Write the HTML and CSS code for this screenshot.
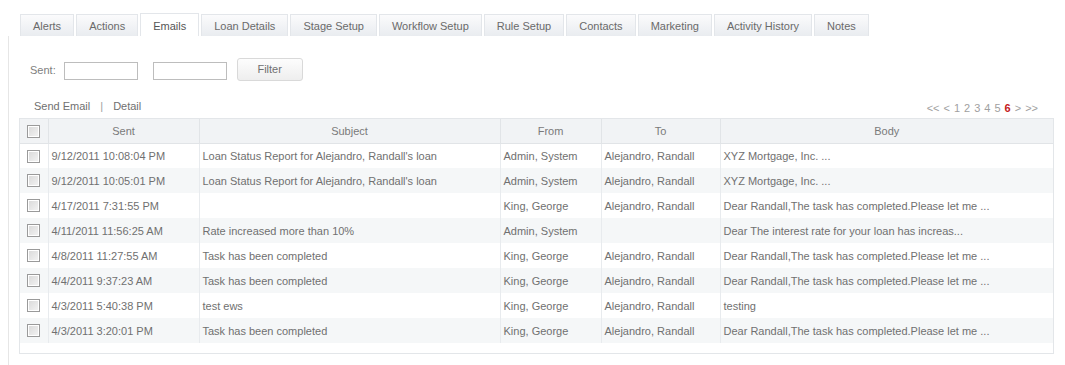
FILE: index.html
```html
<!DOCTYPE html>
<html>
<head>
<meta charset="utf-8">
<link rel="stylesheet" href="styles.css">
</head>
<body>
<div class="page">
  <div class="tabs">
    <div class="tab">Alerts</div>
    <div class="tab">Actions</div>
    <div class="tab active">Emails</div>
    <div class="tab">Loan Details</div>
    <div class="tab">Stage Setup</div>
    <div class="tab">Workflow Setup</div>
    <div class="tab">Rule Setup</div>
    <div class="tab">Contacts</div>
    <div class="tab">Marketing</div>
    <div class="tab">Activity History</div>
    <div class="tab">Notes</div>
  </div>
  <div class="panel">
    <div class="filter">
      <span class="label">Sent:</span>
      <span class="input"></span>
      <span class="input second"></span>
      <span class="btn">Filter</span>
    </div>
    <div class="toolbar">
      <div class="links"><span>Send Email</span><span class="sep">|</span><span>Detail</span></div>
      <div class="pager"><span>&lt;&lt;</span><span>&lt;</span><span>1</span><span>2</span><span>3</span><span>4</span><span>5</span><span class="cur">6</span><span>&gt;</span><span>&gt;&gt;</span></div>
    </div>
    <div class="grid">
      <table>
        <colgroup>
          <col class="c-chk"><col class="c-sent"><col class="c-subj"><col class="c-from"><col class="c-to"><col class="c-body">
        </colgroup>
        <thead>
          <tr><th><span class="cb"></span></th><th>Sent</th><th>Subject</th><th>From</th><th>To</th><th>Body</th></tr>
        </thead>
        <tbody>
          <tr><td><span class="cb"></span></td><td>9/12/2011 10:08:04 PM</td><td>Loan Status Report for Alejandro, Randall's loan</td><td>Admin, System</td><td>Alejandro, Randall</td><td>XYZ Mortgage, Inc. ...</td></tr>
          <tr><td><span class="cb"></span></td><td>9/12/2011 10:05:01 PM</td><td>Loan Status Report for Alejandro, Randall's loan</td><td>Admin, System</td><td>Alejandro, Randall</td><td>XYZ Mortgage, Inc. ...</td></tr>
          <tr><td><span class="cb"></span></td><td>4/17/2011 7:31:55 PM</td><td></td><td>King, George</td><td>Alejandro, Randall</td><td>Dear Randall,The task has completed.Please let me ...</td></tr>
          <tr><td><span class="cb"></span></td><td>4/11/2011 11:56:25 AM</td><td>Rate increased more than 10%</td><td>Admin, System</td><td></td><td>Dear The interest rate for your loan has increas...</td></tr>
          <tr><td><span class="cb"></span></td><td>4/8/2011 11:27:55 AM</td><td>Task has been completed</td><td>King, George</td><td>Alejandro, Randall</td><td>Dear Randall,The task has completed.Please let me ...</td></tr>
          <tr><td><span class="cb"></span></td><td>4/4/2011 9:37:23 AM</td><td>Task has been completed</td><td>King, George</td><td>Alejandro, Randall</td><td>Dear Randall,The task has completed.Please let me ...</td></tr>
          <tr><td><span class="cb"></span></td><td>4/3/2011 5:40:38 PM</td><td>test ews</td><td>King, George</td><td>Alejandro, Randall</td><td>testing</td></tr>
          <tr><td><span class="cb"></span></td><td>4/3/2011 3:20:01 PM</td><td>Task has been completed</td><td>King, George</td><td>Alejandro, Randall</td><td>Dear Randall,The task has completed.Please let me ...</td></tr>
        </tbody>
      </table>
    </div>
  </div>
</div>
</body>
</html>
```
FILE: styles.css
```css
* { box-sizing: border-box; }
html, body { margin: 0; padding: 0; background: #fff; }
body {
  font-family: "Liberation Sans", Arial, sans-serif;
  font-size: 11px;
  color: #707070;
}
.page { padding-top: 13px; height: 365px; display: flex; flex-direction: column; }
.tabs { display: flex; gap: 2px; margin-left: 20px; align-items: flex-end; }
.tab {
  height: 22px;
  line-height: 22px;
  padding: 0 12px;
  border: 1px solid #e3e6ea;
  border-bottom: none;
  background: linear-gradient(#fbfbfc, #e9ecf0);
  color: #6a6a6a;
}
.tab.active {
  height: 23px;
  line-height: 24px;
  background: #fff;
  color: #555;
}
.panel {
  flex: 1;
  margin-left: 8px;
  border-left: 1px solid #e6e6e6;
  padding: 22px 0 0 10px;
}
.filter { display: flex; align-items: center; padding-left: 11px; height: 23px; }
.label { color: #808080; margin-right: 8px; }
.input {
  width: 74px; height: 18px;
  border: 1px solid #bdbdbd;
  background: #fff;
  margin-top: 2px;
}
.input.second { margin-left: 15px; }
.btn {
  margin-left: 10px;
  width: 66px; height: 23px;
  border: 1px solid #d9d9d9;
  border-radius: 3px;
  background: linear-gradient(#fdfdfd, #eeeeee);
  text-align: center;
  line-height: 21px;
  color: #707070;
}
.toolbar { display: flex; justify-content: space-between; align-items: flex-end; height: 33px; padding: 0 27px 0 15px; }
.links { color: #707070; padding-bottom: 2px; }
.links .sep { margin: 0 10px; color: #a0a0a0; }
.pager { display: flex; gap: 4px; color: #a0a0a0; font-size: 11px; padding-bottom: 0; }
.pager span { display: inline-block; }
.pager .cur { color: #c41a1a; font-weight: bold; }
.grid {
  margin-top: 4px;
  width: 1035px;
  border: 1px solid #e3e6e9;
  padding-bottom: 10px;
}
table { border-collapse: collapse; width: 100%; table-layout: fixed; }
col.c-chk { width: 28px; }
col.c-sent { width: 151px; }
col.c-subj { width: 301px; }
col.c-from { width: 101px; }
col.c-to { width: 119px; }
th {
  height: 24px;
  font-weight: normal;
  color: #7a7a7a;
  background: #f1f3f5;
  border-left: 1px solid #e1e4e7;
  border-bottom: 1px solid #e1e4e7;
  text-align: center;
  padding: 0;
}
td {
  height: 25px;
  padding: 0 3px;
  border-left: 1px solid #e8ebee;
  white-space: nowrap;
  overflow: hidden;
  color: #707070;
}
th:first-child, td:first-child { border-left: none; text-align: center; padding: 0; }
tbody tr:nth-child(even) td { background: #f5f7f8; }
.cb {
  display: inline-block;
  width: 13px; height: 13px;
  border: 1px solid #9a9a9a;
  background: linear-gradient(135deg, #d8d8d8, #f4f4f4);
  box-shadow: inset 0 0 0 1px #fff;
  vertical-align: middle;
}
```
